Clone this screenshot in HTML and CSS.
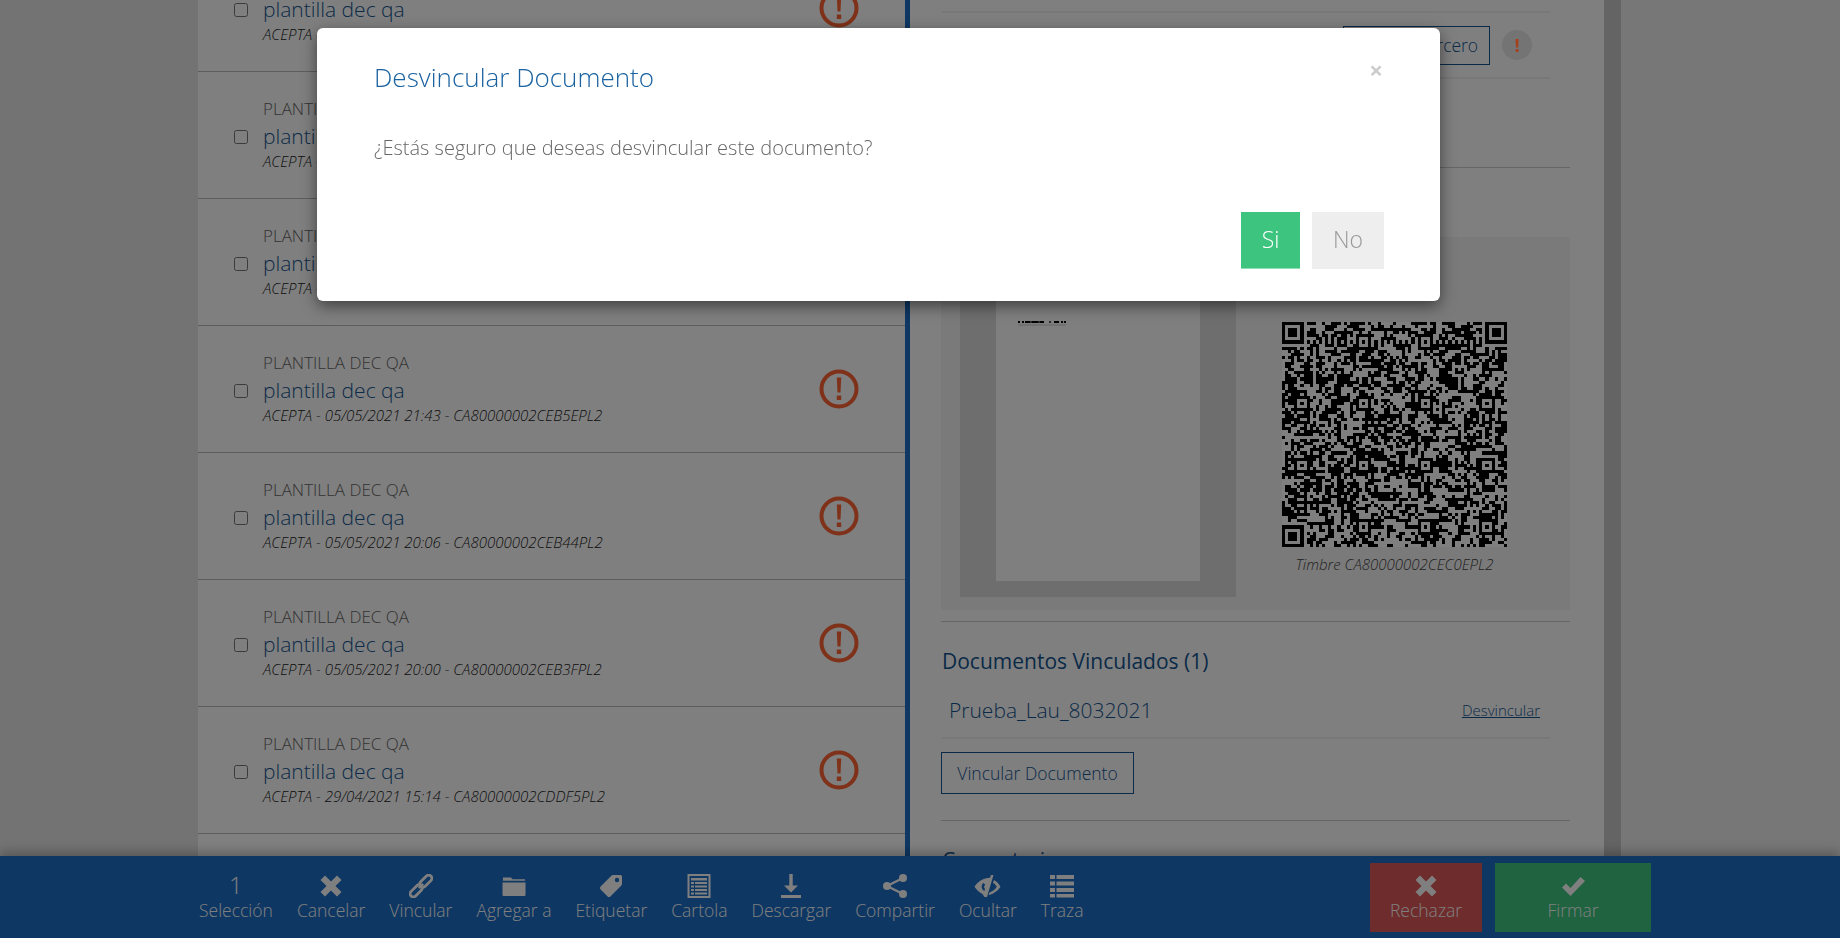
FILE: index.html

```html
<!DOCTYPE html>
<html lang="es">
<head>
  <meta charset="UTF-8">
  <title>Documentos</title>
  <link rel="stylesheet" href="styles.css">
</head>
<body>
  <svg class="icon-defs" width="0" height="0">
    <symbol id="i-warn" viewBox="0 0 40 40">
      <circle cx="20" cy="20" r="17.5" fill="none" stroke="currentColor" stroke-width="4"/>
      <path d="M17.8 8.5h4.4l-.7 15h-3zM17.8 26.5h4.4v4.5h-4.4z" fill="currentColor"/>
    </symbol>
    <symbol id="i-times" viewBox="0 0 24 24">
      <path d="M6 1.500 12 7.500 18 1.500 22.500 6 16.500 12 22.500 18 18 22.500 12 16.500 6 22.500 1.500 18 7.500 12 1.500 6z"/>
    </symbol>
    <symbol id="i-link" viewBox="0 0 24 24">
      <g transform="rotate(-45 12 12)" fill="none" stroke="currentColor" stroke-width="2.800">
        <rect x="-2" y="8.800" width="14.500" height="6.400" rx="3.200"/>
        <rect x="11.500" y="8.800" width="14.500" height="6.400" rx="3.200"/>
        <path d="M9 12h6"/>
      </g>
    </symbol>
    <symbol id="i-folder" viewBox="0 0 24 24">
      <path d="M1 3.500h8l1.500 1.800H23v1.500H1zM.5 8.500h23V21a1 1 0 0 1-1 1h-21a1 1 0 0 1-1-1z"/>
    </symbol>
    <symbol id="i-tag" viewBox="0 0 24 24">
      <path fill-rule="evenodd" d="M14 1h7.500a1.500 1.500 0 0 1 1.500 1.500V10a2 2 0 0 1-.6 1.400L11.400 22.400a2 2 0 0 1-2.800 0L1.600 15.400a2 2 0 0 1 0-2.800L12.600 1.600A2 2 0 0 1 14 1zM18 3.800a2.200 2.200 0 1 0 0 4.400 2.200 2.200 0 0 0 0-4.400z"/>
    </symbol>
    <symbol id="i-sheet" viewBox="0 0 24 24">
      <path fill-rule="evenodd" d="M.5 0h23v24H.5zM2.500 2v20h19V2zM4 4h16v2.500H4zM4 8h3v2H4zM8 8h12v2H8zM4 11.500h3v2H4zM8 11.500h12v2H8zM4 15h3v2H4zM8 15h12v2H8zM4 18.500h3v2H4zM8 18.500h12v2H8z"/>
    </symbol>
    <symbol id="i-save" viewBox="0 0 24 24">
      <path d="M10.300 0h3.400v11.500H19L12 18.500 5 11.500h5.300zM2 21h20v3H2z"/>
    </symbol>
    <symbol id="i-share" viewBox="0 0 24 24">
      <circle cx="20" cy="4" r="4"/><circle cx="20" cy="20" r="4"/><circle cx="4" cy="12" r="4"/>
      <path d="M4 12 20 4M4 12l16 8" fill="none" stroke="currentColor" stroke-width="2.400"/>
    </symbol>
    <symbol id="i-eye" viewBox="0 -1 26 24">
      <path fill-rule="evenodd" d="M15.500 2.800C9 3 3.500 6.500 0 11.700c2 3.300 5 5.800 8 7.300L10 22h2.500L19 0h-2.500zM9 8c-2.700 2-2.500 6 .8 8l.8-2.300c-1.300-.7-1.400-2.700.2-3.900z"/>
      <path d="M19.500 5c2.500 1.500 5 3.800 6.500 6.700-2.500 4.100-7 7.300-12 8.600l1-2.800c3-1.200 5.500-3 7.300-5.800-1-1.700-2.300-2.900-3.800-3.900z"/>
    </symbol>
    <symbol id="i-list" viewBox="0 0 24 24">
      <path d="M0 1h5v4H0zM6.500 1H24v4H6.500zM0 7.500h5v4H0zM6.500 7.500H24v4H6.500zM0 14h5v4H0zM6.500 14H24v4H6.500zM0 20h5v3.500H0zM6.500 20H24v3.500H6.500z"/>
    </symbol>
    <symbol id="i-check" viewBox="0 0 24 24">
      <path d="M1 13.500 5 9.500 9.500 14 19.500 3 24 7 9.500 22z"/>
    </symbol>
  </svg>

  <div class="page">
    <div class="main">
      <div class="gutter"></div>

      <div class="doc-list">
        <div class="doc-row">
          <input type="checkbox" class="doc-check">
          <div class="doc-text">
            <div class="doc-type">PLANTILLA DEC QA</div>
            <div class="doc-name">plantilla dec qa</div>
            <div class="doc-meta">ACEPTA - 06/05/2021 10:12 - CA80000002CEC0EPL2</div>
          </div>
          <svg class="warn-icon"><use href="#i-warn"/></svg>
        </div>
        <div class="doc-row">
          <input type="checkbox" class="doc-check">
          <div class="doc-text">
            <div class="doc-type">PLANTILLA DEC QA</div>
            <div class="doc-name">plantilla dec qa</div>
            <div class="doc-meta">ACEPTA - 06/05/2021 09:58 - CA80000002CEBFEPL2</div>
          </div>
          <svg class="warn-icon"><use href="#i-warn"/></svg>
        </div>
        <div class="doc-row">
          <input type="checkbox" class="doc-check">
          <div class="doc-text">
            <div class="doc-type">PLANTILLA DEC QA</div>
            <div class="doc-name">plantilla dec qa</div>
            <div class="doc-meta">ACEPTA - 05/05/2021 22:01 - CA80000002CEB6EPL2</div>
          </div>
          <svg class="warn-icon"><use href="#i-warn"/></svg>
        </div>
        <div class="doc-row">
          <input type="checkbox" class="doc-check">
          <div class="doc-text">
            <div class="doc-type">PLANTILLA DEC QA</div>
            <div class="doc-name">plantilla dec qa</div>
            <div class="doc-meta">ACEPTA - 05/05/2021 21:43 - CA80000002CEB5EPL2</div>
          </div>
          <svg class="warn-icon"><use href="#i-warn"/></svg>
        </div>
        <div class="doc-row">
          <input type="checkbox" class="doc-check">
          <div class="doc-text">
            <div class="doc-type">PLANTILLA DEC QA</div>
            <div class="doc-name">plantilla dec qa</div>
            <div class="doc-meta">ACEPTA - 05/05/2021 20:06 - CA80000002CEB44PL2</div>
          </div>
          <svg class="warn-icon"><use href="#i-warn"/></svg>
        </div>
        <div class="doc-row">
          <input type="checkbox" class="doc-check">
          <div class="doc-text">
            <div class="doc-type">PLANTILLA DEC QA</div>
            <div class="doc-name">plantilla dec qa</div>
            <div class="doc-meta">ACEPTA - 05/05/2021 20:00 - CA80000002CEB3FPL2</div>
          </div>
          <svg class="warn-icon"><use href="#i-warn"/></svg>
        </div>
        <div class="doc-row">
          <input type="checkbox" class="doc-check">
          <div class="doc-text">
            <div class="doc-type">PLANTILLA DEC QA</div>
            <div class="doc-name">plantilla dec qa</div>
            <div class="doc-meta">ACEPTA - 29/04/2021 15:14 - CA80000002CDDF5PL2</div>
          </div>
          <svg class="warn-icon"><use href="#i-warn"/></svg>
        </div>
      </div>

      <div class="detail">
        <div class="signer-row">
          <span class="signer-name">MARIA TERESA VALENZUELA ZAMORA</span>
          <button class="outline-btn signer-btn">Asignar Tercero</button>
          <span class="signer-alert"><span class="signer-mark">!</span></span>
        </div>
        <div class="detail-gap"></div>

        <div class="preview">
          <div class="preview-doc">
            <div class="preview-page"><span class="preview-scrap"></span></div>
          </div>
          <div class="stamp">
            <svg id="qr" class="stamp-qr" viewBox="0 0 73 73" shape-rendering="crispEdges"></svg>
            <div class="stamp-caption">Timbre CA80000002CEC0EPL2</div>
          </div>
        </div>

        <div class="linked">
          <h3 class="detail-title">Documentos Vinculados (1)</h3>
          <div class="linked-row">
            <span class="linked-name">Prueba_Lau_8032021</span>
            <a class="linked-action">Desvincular</a>
          </div>
          <button class="outline-btn link-btn">Vincular Documento</button>
        </div>

        <div class="comments">
          <h3 class="detail-title">Comentarios</h3>
        </div>
      </div>

      <div class="scroll-track"></div>
      <div class="outer"></div>
    </div>

    <div class="toolbar">
      <div class="tool-group">
        <div class="tool"><span class="tool-count">1</span><span>Selección</span></div>
        <div class="tool"><svg class="tool-icon"><use href="#i-times"/></svg><span>Cancelar</span></div>
        <div class="tool"><svg class="tool-icon"><use href="#i-link"/></svg><span>Vincular</span></div>
        <div class="tool"><svg class="tool-icon"><use href="#i-folder"/></svg><span>Agregar a</span></div>
        <div class="tool"><svg class="tool-icon"><use href="#i-tag"/></svg><span>Etiquetar</span></div>
        <div class="tool"><svg class="tool-icon"><use href="#i-sheet"/></svg><span>Cartola</span></div>
        <div class="tool"><svg class="tool-icon"><use href="#i-save"/></svg><span>Descargar</span></div>
        <div class="tool"><svg class="tool-icon"><use href="#i-share"/></svg><span>Compartir</span></div>
        <div class="tool"><svg class="tool-icon tool-icon-wide"><use href="#i-eye"/></svg><span>Ocultar</span></div>
        <div class="tool"><svg class="tool-icon"><use href="#i-list"/></svg><span>Traza</span></div>
      </div>
      <div class="tool-actions">
        <div class="action action-reject"><svg class="tool-icon"><use href="#i-times"/></svg><span>Rechazar</span></div>
        <div class="action action-sign"><svg class="tool-icon"><use href="#i-check"/></svg><span>Firmar</span></div>
      </div>
    </div>
  </div>

  <div class="backdrop"></div>

  <div class="modal">
    <span class="modal-close">×</span>
    <h2 class="modal-title">Desvincular Documento</h2>
    <p class="modal-text">¿Estás seguro que deseas desvincular este documento?</p>
    <div class="modal-footer">
      <button class="btn-yes">Si</button>
      <button class="btn-no">No</button>
    </div>
  </div>

  <script src="qr.js"></script>
</body>
</html>
```

FILE: styles.css

```css
* {
  box-sizing: border-box;
}
body {
  margin: 0;
  font-family: "Open Sans", sans-serif;
  font-weight: 300;
  color: #666;
  background: #eee;
}
button {
  font-family: inherit;
  font-weight: 300;
}
.icon-defs {
  position: absolute;
}
.page {
  height: 100vh;
  display: flex;
  flex-direction: column;
  overflow: hidden;
}
.main {
  flex: 1;
  min-height: 0;
  display: flex;
  overflow: hidden;
}
.gutter {
  width: 198px;
  background: #e6e6e6;
}
.outer {
  flex: 1;
  background: #eee;
}
.scroll-track {
  width: 17px;
  background: #c8c8c8;
}

/* document list */
.doc-list {
  width: 712px;
  flex: none;
  margin-top: -55px;
  background: #fff;
  border-right: 5px solid #1c6ec6;
}
.doc-row {
  height: 127px;
  display: flex;
  align-items: center;
  padding-left: 36px;
  border-bottom: 1px solid #bbb;
}
.doc-check {
  width: 14px;
  height: 14px;
  margin: 4px 15px 0 0;
}
.doc-text {
  flex: 1;
  padding-bottom: 4px;
}
.doc-type {
  font-size: 17px;
  line-height: 23px;
  color: #666;
}
.doc-name {
  font-size: 21px;
  line-height: 33px;
  color: #15558f;
}
.doc-meta {
  font-size: 15px;
  line-height: 16px;
  font-style: italic;
  color: #222;
}
.warn-icon {
  width: 40px;
  height: 40px;
  margin-right: 46px;
  color: #7f3219;
  position: relative;
  z-index: 20;
}

/* detail panel */
.detail {
  width: 694px;
  flex: none;
  background: #fff;
  padding: 11px 34px 0 31px;
}
.signer-row {
  width: 609px;
  height: 68px;
  display: flex;
  align-items: center;
  border-top: 2px solid #f0f0f0;
  border-bottom: 2px solid #f0f0f0;
}
.signer-name {
  width: 402px;
  font-size: 17px;
  padding-bottom: 24px;
  white-space: nowrap;
}
.outline-btn {
  background: #fff;
  border: 1px solid #15558f;
  color: #15558f;
  font-size: 17.5px;
}
.signer-btn {
  width: 147px;
  height: 39px;
  padding: 0;
}
.signer-alert {
  width: 30px;
  height: 30px;
  margin-left: 12px;
  border-radius: 50%;
  background: #e8e8e8;
  font-size: 18px;
  line-height: 30px;
  text-align: center;
}
.signer-mark {
  color: #a83f1c;
  font-weight: 700;
  position: relative;
  z-index: 20;
}
.detail-gap {
  height: 89px;
  border-bottom: 1px solid #ccc;
  margin-bottom: 69px;
}
.preview {
  height: 373px;
  display: flex;
  background: #f5f5f5;
  padding: 13px 0 13px 19px;
}
.preview-doc {
  width: 276px;
  padding: 0 36px 16px;
  background: #ddd;
}
.preview-page {
  height: 100%;
  background: #fff;
  padding: 71px 0 0 22px;
}
.preview-scrap {
  display: block;
  width: 48px;
  height: 2px;
  box-shadow: 0 3px 1px rgba(0,0,0,0.12);
  background: linear-gradient(90deg, #000 0 2px, transparent 2px 4px, #000 4px 6px, transparent 6px 7px, #000 7px 12px, #555 12px 14px, #000 14px 20px, #555 20px 22px, #000 22px 26px, transparent 26px 31px, #555 31px 33px, transparent 33px 36px, #000 36px 41px, transparent 41px 43px, #000 43px 45px, transparent 45px 46px, #000 46px 48px);
}
.stamp {
  margin-left: 46px;
  width: 225px;
  padding-top: 72px;
}
.stamp-qr {
  display: block;
  width: 225px;
  height: 225px;
  background: #fff;
}
.stamp-caption {
  margin-top: 7px;
  font-size: 15px;
  line-height: 20px;
  font-style: italic;
  text-align: center;
  color: #444;
  white-space: nowrap;
}
.linked {
  margin-top: 11px;
  height: 200px;
  border-top: 1px solid #ccc;
  border-bottom: 1px solid #ccc;
}
.detail-title {
  margin: 0;
  font-size: 21px;
  line-height: 26px;
  font-weight: 400;
  color: #15558f;
  padding: 26px 0 0 1px;
}
.linked-row {
  width: 609px;
  height: 57px;
  display: flex;
  align-items: center;
  justify-content: space-between;
  padding: 0 10px 0 8px;
  border-bottom: 2px solid #f0f0f0;
  margin-top: 8px;
}
.linked-name {
  font-size: 21px;
  color: #15558f;
}
.linked-action {
  font-size: 15px;
  color: #15558f;
  text-decoration: underline;
}
.link-btn {
  display: block;
  margin-top: 13px;
  width: 193px;
  height: 42px;
  padding: 0;
}

/* bottom toolbar */
.toolbar {
  height: 82px;
  flex: none;
  display: flex;
  justify-content: space-between;
  padding: 7px 189px 6px 199px;
  background: #1c6ec6;
  color: #fff;
  font-size: 17.5px;
  box-shadow: 0 -4px 10px rgba(0,0,0,0.25);
  position: relative;
}
.tool-group {
  display: flex;
  gap: 24px;
}
.tool, .action {
  display: flex;
  flex-direction: column;
  align-items: center;
}
.tool span, .action span {
  line-height: 24px;
}
.tool-icon {
  width: 24px;
  height: 24px;
  margin: 11px 0 0;
  fill: currentColor;
  color: #fff;
}
.tool-icon-wide {
  width: 27px;
}
.tool .tool-count {
  font-size: 24px;
  line-height: 30px;
  margin: 7px 0 -2px;
}
.tool-actions {
  display: flex;
  gap: 13px;
}
.action {
  height: 69px;
}
.action-reject {
  width: 112px;
  background: #de5858;
}
.action-sign {
  width: 156px;
  background: #40c680;
}

/* modal */
.backdrop {
  position: fixed;
  inset: 0;
  background: #000;
  opacity: 0.5;
  z-index: 10;
}
.modal {
  position: fixed;
  top: 28px;
  left: 317px;
  width: 1123px;
  height: 273px;
  padding: 0 56px 0 57px;
  background: #fff;
  border-radius: 6px;
  box-shadow: 0 5px 15px rgba(0,0,0,0.5);
  z-index: 30;
}
.modal-close {
  position: absolute;
  top: 27px;
  right: 57px;
  font-size: 24px;
  line-height: 30px;
  font-weight: 700;
  color: #ccc;
}
.modal-title {
  margin: 0;
  padding-top: 32px;
  font-size: 26px;
  line-height: 34px;
  font-weight: 300;
  color: #1a62a0;
}
.modal-text {
  margin: 0;
  padding-top: 41px;
  font-size: 20px;
  line-height: 26px;
  color: #666;
}
.modal-footer {
  margin-top: 51px;
  display: flex;
  justify-content: flex-end;
  gap: 12px;
}
.btn-yes, .btn-no {
  height: 57px;
  border: 0;
  padding: 0 0 3px;
  font-size: 23px;
}
.btn-yes {
  width: 59px;
  background: #3dc47e;
  border-bottom: 1px solid #8fdcb5;
  color: #fff;
}
.btn-no {
  width: 72px;
  background: #eee;
  color: #999;
}
```

FILE: qr.js

```js
// draws the stamp as a version 14 style grid, 73 modules a side
var size = 73;
var grid = [];
var seed = 20210505;

function next() {
  seed = (seed + 0x6d2b79f5) | 0;
  var t = Math.imul(seed ^ (seed >>> 15), 1 | seed);
  t = (t + Math.imul(t ^ (t >>> 7), 61 | t)) ^ t;
  return ((t ^ (t >>> 14)) >>> 0) / 4294967296;
}

for (var y = 0; y < size; y++) {
  grid[y] = [];
  for (var x = 0; x < size; x++) {
    // lean on the neighbours so the modules clump like real data
    var near = (x > 0 ? grid[y][x - 1] : 0) + (y > 0 ? grid[y - 1][x] : 0);
    grid[y][x] = next() < 0.42 + near * 0.09 ? 1 : 0;
  }
}

function square(cx, cy, r, outer) {
  for (var y = cy - r; y <= cy + r; y++) {
    for (var x = cx - r; x <= cx + r; x++) {
      if (y < 0 || x < 0 || y >= size || x >= size) continue;
      var d = Math.max(Math.abs(x - cx), Math.abs(y - cy));
      grid[y][x] = outer(d);
    }
  }
}

// timing lines
for (var i = 0; i < size; i++) {
  grid[6][i] = grid[i][6] = i % 2 === 0 ? 1 : 0;
}

// alignment marks
var marks = [6, 26, 46, 66];
marks.forEach(function (my) {
  marks.forEach(function (mx) {
    if ((mx === 6 && my === 6) || (mx === 6 && my === 66) || (mx === 66 && my === 6)) return;
    square(mx, my, 2, function (d) { return d === 1 ? 0 : 1; });
  });
});

// finder marks with their quiet edge
[[3, 3], [size - 4, 3], [3, size - 4]].forEach(function (f) {
  square(f[0], f[1], 4, function (d) { return d === 2 || d === 4 ? 0 : 1; });
});

var d = "";
for (var r = 0; r < size; r++) {
  for (var c = 0; c < size; c++) {
    if (grid[r][c]) d += "M" + c + " " + r + "h1v1h-1z";
  }
}
var path = document.createElementNS("http://www.w3.org/2000/svg", "path");
path.setAttribute("d", d);
document.getElementById("qr").appendChild(path);
```
